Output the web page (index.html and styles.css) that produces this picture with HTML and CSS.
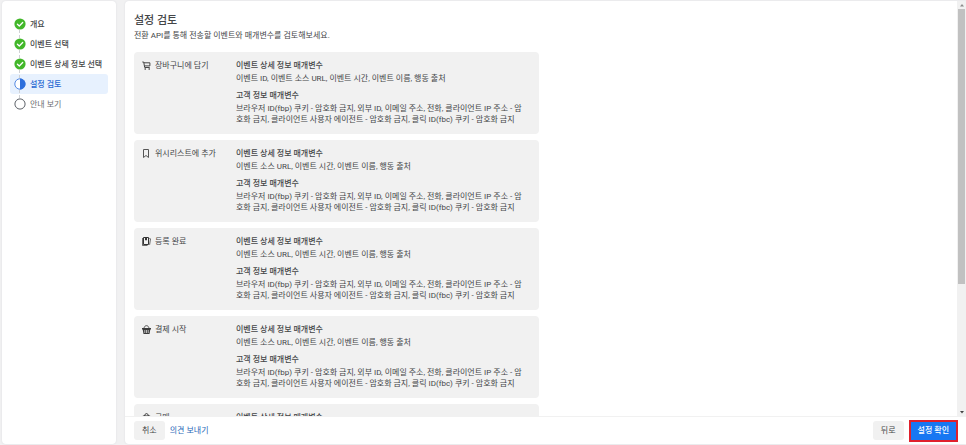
FILE: index.html
```
<!DOCTYPE html>
<html lang="ko">
<head>
<meta charset="utf-8">
<title>설정 검토</title>
<link rel="stylesheet" href="styles.css">
</head>
<body>
<div class="app">
  <nav class="sidebar" aria-label="설정 단계">
    <ol class="steps">
      <li class="step">
        <svg class="step-icon" viewBox="0 0 12 12"><circle cx="6" cy="6" r="5.6" fill="#42b72a"/><path d="M3.4 6.2 5.3 8 8.7 4.5" fill="none" stroke="#fff" stroke-width="1.3" stroke-linecap="round" stroke-linejoin="round"/></svg>
        <span>개요</span>
      </li>
      <li class="step">
        <svg class="step-icon" viewBox="0 0 12 12"><circle cx="6" cy="6" r="5.6" fill="#42b72a"/><path d="M3.4 6.2 5.3 8 8.7 4.5" fill="none" stroke="#fff" stroke-width="1.3" stroke-linecap="round" stroke-linejoin="round"/></svg>
        <span>이벤트 선택</span>
      </li>
      <li class="step">
        <svg class="step-icon" viewBox="0 0 12 12"><circle cx="6" cy="6" r="5.6" fill="#42b72a"/><path d="M3.4 6.2 5.3 8 8.7 4.5" fill="none" stroke="#fff" stroke-width="1.3" stroke-linecap="round" stroke-linejoin="round"/></svg>
        <span>이벤트 상세 정보 선택</span>
      </li>
      <li class="step current" aria-current="step">
        <svg class="step-icon" viewBox="0 0 12 12"><circle cx="6" cy="6" r="5.2" fill="#fff" stroke="#2d6fdc" stroke-width=".8"/><path d="M6 .6a5.4 5.4 0 0 1 0 10.8z" fill="#2d6fdc"/></svg>
        <span>설정 검토</span>
      </li>
      <li class="step upcoming">
        <svg class="step-icon" viewBox="0 0 12 12"><circle cx="6" cy="6" r="5.1" fill="#fff" stroke="#5c6168" stroke-width="1"/></svg>
        <span>안내 보기</span>
      </li>
    </ol>
  </nav>

  <main class="panel">
    <div class="viewport">
      <div class="content">
        <h1>설정 검토</h1>
        <p class="intro">전환 API를 통해 전송할 이벤트와 매개변수를 검토해보세요.</p>
        <div class="cards">
          <section class="card">
            <div class="event">
              <svg class="event-icon" viewBox="0 0 9 9"><path d="M.3 1h1.4l1 5.5h5M2 1.8h5.9v3.1H2.5" fill="none" stroke="#333" stroke-width=".9"/><circle cx="3.2" cy="8" r=".8" fill="#333"/><circle cx="7.2" cy="8" r=".8" fill="#333"/></svg>
              <span>장바구니에 담기</span>
            </div>
            <div class="params">
              <h2>이벤트 상세 정보 매개변수</h2>
              <p>이벤트 ID, 이벤트 소스 URL, 이벤트 시간, 이벤트 이름, 행동 출처</p>
              <h2>고객 정보 매개변수</h2>
              <p>브라우저 ID(fbp) 쿠키 - 암호화 금지, 외부 ID, 이메일 주소, 전화, 클라이언트 IP 주소 - 암호화 금지, 클라이언트 사용자 에이전트 - 암호화 금지, 클릭 ID(fbc) 쿠키 - 암호화 금지</p>
            </div>
          </section>
          <section class="card">
            <div class="event">
              <svg class="event-icon" viewBox="0 0 9 9"><path d="M1.5.5h5v8L4 6.5l-2.500 2z" fill="none" stroke="#555" stroke-width="1" stroke-linejoin="round"/></svg>
              <span>위시리스트에 추가</span>
            </div>
            <div class="params">
              <h2>이벤트 상세 정보 매개변수</h2>
              <p>이벤트 소스 URL, 이벤트 시간, 이벤트 이름, 행동 출처</p>
              <h2>고객 정보 매개변수</h2>
              <p>브라우저 ID(fbp) 쿠키 - 암호화 금지, 외부 ID, 이메일 주소, 전화, 클라이언트 IP 주소 - 암호화 금지, 클라이언트 사용자 에이전트 - 암호화 금지, 클릭 ID(fbc) 쿠키 - 암호화 금지</p>
            </div>
          </section>
          <section class="card">
            <div class="event">
              <svg class="event-icon" viewBox="0 0 9 9"><path d="M1.500.5h5v7h-5z" fill="none" stroke="#333" stroke-width="1"/><path d="M.4 1v7.400h5.100" fill="none" stroke="#333" stroke-width=".8"/><path d="M3 1h2v2.600l-1-.7-1 .7z" fill="#333"/><path d="m7.300 1.400 1.200.4-.9 6" fill="none" stroke="#444" stroke-width=".8"/></svg>
              <span>등록 완료</span>
            </div>
            <div class="params">
              <h2>이벤트 상세 정보 매개변수</h2>
              <p>이벤트 소스 URL, 이벤트 시간, 이벤트 이름, 행동 출처</p>
              <h2>고객 정보 매개변수</h2>
              <p>브라우저 ID(fbp) 쿠키 - 암호화 금지, 외부 ID, 이메일 주소, 전화, 클라이언트 IP 주소 - 암호화 금지, 클라이언트 사용자 에이전트 - 암호화 금지, 클릭 ID(fbc) 쿠키 - 암호화 금지</p>
            </div>
          </section>
          <section class="card">
            <div class="event">
              <svg class="event-icon" viewBox="0 0 9 9"><path d="M2 3.500C2.200-.3 6.800-.3 7 3.500" fill="none" stroke="#444" stroke-width=".9"/><path d="M0 3h9v1.500h-.7L7.500 9h-6L.7 4.500H0z" fill="#3c3c3c"/><path d="M2.800 5v3M4.500 5v3M6.200 5v3" stroke="#f1f1f1" stroke-width=".7"/></svg>
              <span>결제 시작</span>
            </div>
            <div class="params">
              <h2>이벤트 상세 정보 매개변수</h2>
              <p>이벤트 소스 URL, 이벤트 시간, 이벤트 이름, 행동 출처</p>
              <h2>고객 정보 매개변수</h2>
              <p>브라우저 ID(fbp) 쿠키 - 암호화 금지, 외부 ID, 이메일 주소, 전화, 클라이언트 IP 주소 - 암호화 금지, 클라이언트 사용자 에이전트 - 암호화 금지, 클릭 ID(fbc) 쿠키 - 암호화 금지</p>
            </div>
          </section>
          <section class="card">
            <div class="event">
              <svg class="event-icon" viewBox="0 0 9 9"><path d="M2.700 3C2.700-.2 6.300-.2 6.300 3" fill="none" stroke="#333" stroke-width="1"/><path d="M.9 2.500h7.200l.5 6.500H.4z" fill="#333"/><path d="M2.900 3.800c.2 2.300 3 2.300 3.200 0" fill="none" stroke="#f1f1f1" stroke-width=".8"/></svg>
              <span>구매</span>
            </div>
            <div class="params">
              <h2>이벤트 상세 정보 매개변수</h2>
              <p>이벤트 소스 URL, 이벤트 시간, 이벤트 이름, 행동 출처</p>
            </div>
          </section>
        </div>
      </div>
      <div class="scrollbar" aria-hidden="true">
        <svg class="arrow" viewBox="0 0 8 8"><path d="M2 5.5 4 3l2 2.5z" fill="#8b8b8b"/></svg>
        <div class="track"><div class="thumb"></div></div>
        <svg class="arrow" viewBox="0 0 8 8"><path d="M2 3h4L4 5.5z" fill="#444"/></svg>
      </div>
    </div>
    <footer class="actions">
      <button class="button" type="button">취소</button>
      <a class="feedback" href="#">의견 보내기</a>
      <button class="button back" type="button">뒤로</button>
      <button class="button primary" type="button">설정 확인</button>
    </footer>
  </main>
</div>
</body>
</html>
```
FILE: styles.css
```
* {
  box-sizing: border-box;
}

body {
  margin: 0;
  background: #f1f1f2;
  color: #444648;
  font: 8px/11px Roboto, "Noto Sans CJK KR", sans-serif;
}

h1,
h2,
p,
ol {
  margin: 0;
  padding: 0;
}

.app {
  display: grid;
  grid-template-columns: 114px 1fr;
  gap: 9px;
  height: 100vh;
  padding: 1px 0 1px 2px;
}

.sidebar {
  padding: 13px 8px;
  background: #fff;
  border-radius: 4px;
  box-shadow: 0 0 2px #dcdddf;
}

.steps {
  display: grid;
  list-style: none;
}

.step {
  position: relative;
  display: flex;
  align-items: center;
  gap: 4px;
  height: 20px;
  padding-left: 4px;
  border-radius: 3px;
  font-weight: 500;
  white-space: nowrap;
}

.step + .step::before {
  content: "";
  position: absolute;
  top: -4px;
  left: 9px;
  height: 8px;
  border-left: 1px dashed #ced0d4;
}

.step-icon {
  flex: none;
  width: 12px;
  height: 12px;
}

.current {
  background: #e7f1fe;
  color: #2868d2;
}

.upcoming {
  color: #6c6f73;
  font-weight: 400;
}

.panel {
  display: flex;
  flex-direction: column;
  min-width: 0;
  min-height: 0;
  background: #fff;
  border-radius: 4px 0 0 4px;
  box-shadow: 0 0 2px #dcdddf;
}

.viewport {
  display: flex;
  flex: 1;
  min-height: 0;
  overflow: hidden;
}

.content {
  flex: 1;
  min-width: 0;
  padding: 12px 9px 0;
}

h1 {
  font-size: 11px;
  font-weight: 500;
  line-height: 16px;
}

.intro {
  margin: 1px 0 10px;
  line-height: 12px;
}

.cards {
  display: grid;
  gap: 6px;
  max-width: 405px;
}

.card {
  display: grid;
  grid-template-columns: 94px 1fr;
  padding: 8px 16px 9px 8px;
  background: #f1f1f1;
  border-radius: 4px;
}

.event {
  display: flex;
  align-items: center;
  gap: 4px;
  height: 11px;
}

.event-icon {
  flex: none;
  width: 9px;
  height: 9px;
}

h2 {
  margin-bottom: 1px;
  font-size: 8px;
  font-weight: 500;
  line-height: 12px;
}

p + h2 {
  margin-top: 6px;
}

.params p {
  word-break: break-all;
}

.scrollbar {
  display: flex;
  flex: none;
  flex-direction: column;
  align-items: center;
  width: 9px;
  background: #f1f1f1;
}

.arrow {
  width: 8px;
  height: 8px;
}

.track {
  flex: 1;
  width: 7px;
}

.thumb {
  height: 69%;
  background: #c1c1c1;
}

.actions {
  display: flex;
  align-items: center;
  gap: 5px;
  height: 28px;
  padding: 0 8px 0 9px;
  border-top: 1px solid #f1f1f1;
}

.button {
  height: 19px;
  padding: 0 8px;
  border: 0;
  border-radius: 3px;
  background: #f1f1f1;
  color: #444648;
  font: inherit;
}

.feedback {
  color: #2868b8;
  text-decoration: none;
}

.back {
  margin-left: auto;
}

.primary {
  height: 22px;
  padding: 0 7px;
  border: 2px solid #e0202c;
  border-radius: 0;
  background: #1877f2;
  color: #fff;
  font-weight: 500;
}
```
